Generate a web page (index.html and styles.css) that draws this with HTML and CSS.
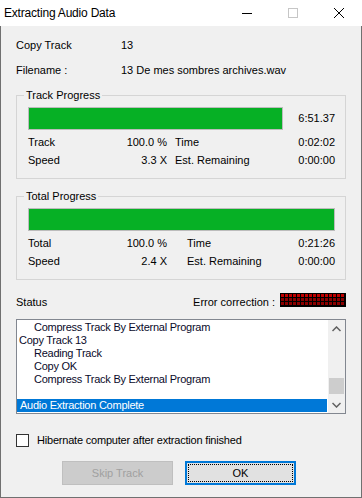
FILE: index.html
```html
<!DOCTYPE html>
<html lang="en">
<head>
    <meta charset="UTF-8">
    <title>Extracting Audio Data</title>
    <link rel="stylesheet" href="styles.css">
</head>
<body>
    <div class="window">
        <div class="titlebar">
            <span class="title">Extracting Audio Data</span>
            <div class="controls">
                <span class="ctl"><svg width="10" height="10" viewBox="0 0 10 10"><path d="M0 5.5H10" stroke="#000" stroke-width="1"/></svg></span>
                <span class="ctl"><svg width="10" height="10" viewBox="0 0 10 10"><rect x="0.5" y="0.5" width="9" height="9" fill="none" stroke="#c6c6c6"/></svg></span>
                <span class="ctl"><svg width="10" height="10" viewBox="0 0 10 10"><path d="M0 0L10 10M10 0L0 10" stroke="#000" stroke-width="1"/></svg></span>
            </div>
        </div>

        <div class="client">
            <div class="info-row">
                <span class="info-label">Copy Track</span>
                <span>13</span>
            </div>
            <div class="info-row second">
                <span class="info-label">Filename :</span>
                <span>13 De mes sombres archives.wav</span>
            </div>

            <fieldset class="group first">
                <legend>Track Progress</legend>
                <div class="bar-row">
                    <div class="progress short"><div class="fill" style="width: 100%"></div></div>
                    <span>6:51.37</span>
                </div>
                <div class="stat-row top">
                    <div class="half"><span>Track</span><span>100.0 %</span></div>
                    <div class="half right"><span>Time</span><span>0:02:02</span></div>
                </div>
                <div class="stat-row">
                    <div class="half"><span>Speed</span><span>3.3 X</span></div>
                    <div class="half right"><span>Est. Remaining</span><span>0:00:00</span></div>
                </div>
            </fieldset>

            <fieldset class="group">
                <legend>Total Progress</legend>
                <div class="bar-row">
                    <div class="progress"><div class="fill" style="width: 100%"></div></div>
                </div>
                <div class="stat-row top">
                    <div class="half"><span>Total</span><span>100.0 %</span></div>
                    <div class="half right wide"><span>Time</span><span>0:21:26</span></div>
                </div>
                <div class="stat-row">
                    <div class="half"><span>Speed</span><span>2.4 X</span></div>
                    <div class="half right wide"><span>Est. Remaining</span><span>0:00:00</span></div>
                </div>
            </fieldset>

            <div class="status-row">
                <span class="status-label">Status</span>
                <span class="err-label">Error correction :</span>
                <svg class="err-meter" width="66" height="14" viewBox="0 0 66 14">
                    <defs>
                        <pattern id="cellHi" width="4" height="4" patternUnits="userSpaceOnUse" x="1" y="1">
                            <rect width="3" height="3" fill="#c00000"/>
                        </pattern>
                        <pattern id="cellLo" width="4" height="4" patternUnits="userSpaceOnUse" x="1" y="1">
                            <rect width="3" height="3" fill="#8a0000"/>
                        </pattern>
                    </defs>
                    <rect width="66" height="14" fill="#000"/>
                    <rect x="1" y="1" width="64" height="4" fill="url(#cellHi)"/>
                    <rect x="1" y="5" width="64" height="8" fill="url(#cellLo)"/>
                </svg>
            </div>

            <div class="listbox">
                <ul class="items">
                    <li class="indent">Compress Track By External Program</li>
                    <li>Copy Track 13</li>
                    <li class="indent">Reading Track</li>
                    <li class="indent">Copy OK</li>
                    <li class="indent">Compress Track By External Program</li>
                    <li>&nbsp;</li>
                    <li class="selected">Audio Extraction Complete</li>
                </ul>
                <div class="scrollbar">
                    <div class="sb-btn"><svg width="9" height="6" viewBox="0 0 9 6"><path d="M0.5 5L4.5 1L8.5 5" fill="none" stroke="#606060" stroke-width="1.5"/></svg></div>
                    <div class="sb-track"><div class="sb-thumb"></div></div>
                    <div class="sb-btn"><svg width="9" height="6" viewBox="0 0 9 6"><path d="M0.5 1L4.5 5L8.5 1" fill="none" stroke="#606060" stroke-width="1.5"/></svg></div>
                </div>
            </div>

            <label class="check-row">
                <span class="checkbox"></span>
                <span class="check-text">Hibernate computer after extraction finished</span>
            </label>

            <div class="buttons">
                <button class="btn disabled" disabled>Skip Track</button>
                <button class="btn default"><span class="focus">OK</span></button>
            </div>
        </div>
    </div>
</body>
</html>
```

FILE: styles.css
```css
html, body {
    margin: 0;
    padding: 0;
    background: #f0f0f0;
}
body {
    font-family: "Liberation Sans", Arial, sans-serif;
    font-size: 11px;
    color: #000;
}
.window {
    width: 362px;
    height: 498px;
    display: flex;
    flex-direction: column;
}
.titlebar {
    height: 26px;
    background: #fff;
    display: flex;
    align-items: center;
    justify-content: space-between;
    flex-shrink: 0;
}
.title {
    font-size: 12px;
    padding-left: 4px;
    letter-spacing: -0.2px;
}
.controls {
    display: flex;
    height: 26px;
}
.ctl {
    width: 46px;
    display: flex;
    align-items: center;
    justify-content: center;
}
.client {
    flex: 1;
    background: #f0f0f0;
    border: 1px solid #707070;
    border-top: none;
    padding: 13px 15px 0 15px;
    line-height: 13px;
}
.info-row {
    display: flex;
    height: 13px;
}
.info-row.second {
    margin-top: 12px;
}
.info-label {
    width: 105px;
}
.group {
    margin: 12px 0 0 0;
    padding: 5px 10px 11px 11px;
    border: 1px solid #d5d5d5;
    min-inline-size: 0;
}
.group + .group {
    margin-top: 11px;
}
.group legend {
    padding: 0 2px;
    margin-left: -4px;
    line-height: 13px;
}
.bar-row {
    display: flex;
    justify-content: space-between;
    align-items: center;
    height: 23px;
}
.progress {
    flex: 1;
    height: 23px;
    box-sizing: border-box;
    border: 1px solid #bcbcbc;
    background: #e6e6e6;
}
.progress.short {
    flex: none;
    width: 255px;
}
.fill {
    height: 100%;
    background: #06b025;
}
.stat-row {
    display: flex;
    height: 13px;
    margin-top: 5px;
}
.stat-row.top {
    margin-top: 6px;
}
.half {
    display: flex;
    justify-content: space-between;
    width: 139px;
}
.half.right {
    flex: 1;
    width: auto;
    margin-left: 8px;
}
.half.right.wide {
    margin-left: 20px;
}
.status-row {
    display: flex;
    align-items: center;
    height: 14px;
    margin-top: 13px;
}
.status-label {
    flex: 1;
    padding-top: 4px;
}
.err-label {
    padding-top: 4px;
    margin-right: 5px;
}
.err-meter {
    display: block;
}
.listbox {
    margin-top: 12px;
    height: 95px;
    box-sizing: border-box;
    border: 1px solid #828790;
    background: #fff;
    display: flex;
}
.items {
    list-style: none;
    margin: 0;
    padding: 1px 0 0 0;
    flex: 1;
    overflow: hidden;
    color: #0a0a2a;
    letter-spacing: -0.25px;
}
.items li {
    height: 13px;
    line-height: 13px;
    padding-left: 2px;
    white-space: nowrap;
}
.items li.indent {
    padding-left: 17px;
}
.items li.selected {
    background: #0078d7;
    color: #fff;
    padding-left: 3px;
    margin-right: 1px;
}
.scrollbar {
    width: 17px;
    background: #f0f0f0;
    display: flex;
    flex-direction: column;
}
.sb-btn {
    height: 17px;
    display: flex;
    align-items: center;
    justify-content: center;
}
.sb-track {
    flex: 1;
    display: flex;
    flex-direction: column;
    justify-content: flex-end;
}
.sb-thumb {
    height: 16px;
    margin: 0 1px 2px 1px;
    background: #cdcdcd;
}
.check-row {
    display: flex;
    align-items: center;
    margin-top: 20px;
    height: 13px;
}
.check-text {
    letter-spacing: -0.2px;
}
.checkbox {
    width: 13px;
    height: 13px;
    box-sizing: border-box;
    border: 1px solid #333;
    background: #fff;
    margin-right: 8px;
}
.buttons {
    display: flex;
    gap: 12px;
    margin-top: 14px;
    padding-left: 46px;
}
.btn {
    width: 111px;
    height: 24px;
    box-sizing: border-box;
    font-family: "Liberation Sans", Arial, sans-serif;
    font-size: 11px;
    padding: 0;
}
.btn.disabled {
    background: #cccccc;
    border: 1px solid #bfbfbf;
    color: #a0a0a0;
}
.btn.default {
    background: #e1e1e1;
    border: 2px solid #0078d7;
    color: #000;
    padding: 1px;
}
.btn.default .focus {
    display: flex;
    align-items: center;
    justify-content: center;
    height: 100%;
    box-sizing: border-box;
    border: 1px dotted #000;
}
```
